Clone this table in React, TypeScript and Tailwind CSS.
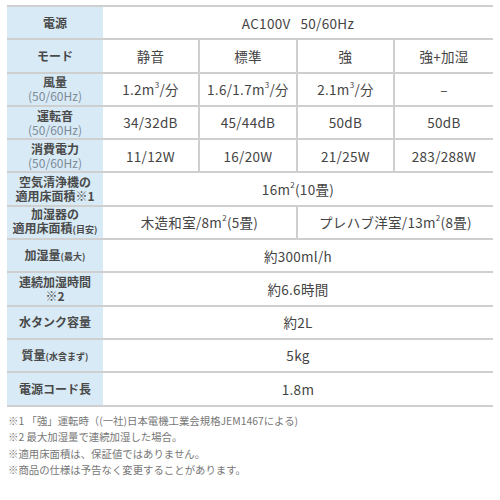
import type { ReactNode } from "react";

const font = { fontFamily: '"Noto Sans CJK JP", "Noto Sans", sans-serif' };

function Label({ children }: { children: ReactNode }) {
  return (
    <div className="flex flex-col items-center justify-center bg-[#d8eaf6] text-center text-[12px] font-bold leading-[14px] text-[#4a4a4a]">
      {children}
    </div>
  );
}

function Cell({ children, last }: { children: ReactNode; last?: boolean }) {
  return (
    <div
      className={`flex items-center justify-center text-[13.5px] tracking-[0.3px] text-[#444] ${
        last ? "" : "border-r-2 border-[#cfcfcf]"
      }`}
    >
      {children}
    </div>
  );
}

function Hz() {
  return (
    <span className="text-[12px] font-normal leading-[14px] text-[#7d8a96]">
      (50/60Hz)
    </span>
  );
}

function Small({ children }: { children: ReactNode }) {
  return <span className="text-[9px] font-bold">{children}</span>;
}

type Row = { label: ReactNode; values: ReactNode[] };

const rows: Row[] = [
  { label: "電源", values: ["AC100V\u00a0\u00a0\u00a050/60Hz"] },
  { label: "モード", values: ["静音", "標準", "強", "強+加湿"] },
  {
    label: (
      <>
        <span>風量</span>
        <Hz />
      </>
    ),
    values: [
      <>1.2m<sup className="text-[8px]">3</sup>/分</>,
      <>1.6/1.7m<sup className="text-[8px]">3</sup>/分</>,
      <>2.1m<sup className="text-[8px]">3</sup>/分</>,
      "–",
    ],
  },
  {
    label: (
      <>
        <span>運転音</span>
        <Hz />
      </>
    ),
    values: ["34/32dB", "45/44dB", "50dB", "50dB"],
  },
  {
    label: (
      <>
        <span>消費電力</span>
        <Hz />
      </>
    ),
    values: ["11/12W", "16/20W", "21/25W", "283/288W"],
  },
  {
    label: (
      <>
        <span>空気清浄機の</span>
        <span>適用床面積※1</span>
      </>
    ),
    values: [<>16m<sup className="text-[8px]">2</sup>(10畳)</>],
  },
  {
    label: (
      <>
        <span>加湿器の</span>
        <span>
          適用床面積<Small>(目安)</Small>
        </span>
      </>
    ),
    values: [
      <>木造和室/8m<sup className="text-[8px]">2</sup>(5畳)</>,
      <>プレハブ洋室/13m<sup className="text-[8px]">2</sup>(8畳)</>,
    ],
  },
  {
    label: (
      <span>
        加湿量<Small>(最大)</Small>
      </span>
    ),
    values: ["約300ml/h"],
  },
  {
    label: (
      <>
        <span>連続加湿時間</span>
        <span>※2</span>
      </>
    ),
    values: ["約6.6時間"],
  },
  { label: "水タンク容量", values: ["約2L"] },
  {
    label: (
      <span>
        質量<Small>(水含まず)</Small>
      </span>
    ),
    values: ["5kg"],
  },
  { label: "電源コード長", values: ["1.8m"] },
];

export default function App() {
  return (
    <div className="h-[500px] w-[500px] bg-white pt-[5px]" style={font}>
      <div className="ml-[7px] w-[486px] border-t-2 border-[#cfcfcf]">
        {rows.map((row, i) => {
          const n = row.values.length;
          const cols =
            n === 1
              ? "grid-cols-[96px_1fr]"
              : n === 2
                ? "grid-cols-[96px_195px_1fr]"
                : "grid-cols-[96px_97px_98px_97px_1fr]";
          return (
            <div
              key={i}
              className={`grid h-[33.3px] border-b-2 border-[#cfcfcf] ${cols}`}
            >
              <Label>{row.label}</Label>
              {row.values.map((v, j) => (
                <Cell key={j} last={j === n - 1}>
                  {v}
                </Cell>
              ))}
            </div>
          );
        })}
      </div>
      <div className="ml-[8px] mt-[7px] flex flex-col gap-[2px] text-[10.4px] leading-[14.5px] text-[#777]">
        <p>※1 「強」運転時（(一社)日本電機工業会規格JEM1467による)</p>
        <p>※2 最大加湿量で連続加湿した場合。</p>
        <p>※適用床面積は、保証値ではありません。</p>
        <p>※商品の仕様は予告なく変更することがあります。</p>
      </div>
    </div>
  );
}
